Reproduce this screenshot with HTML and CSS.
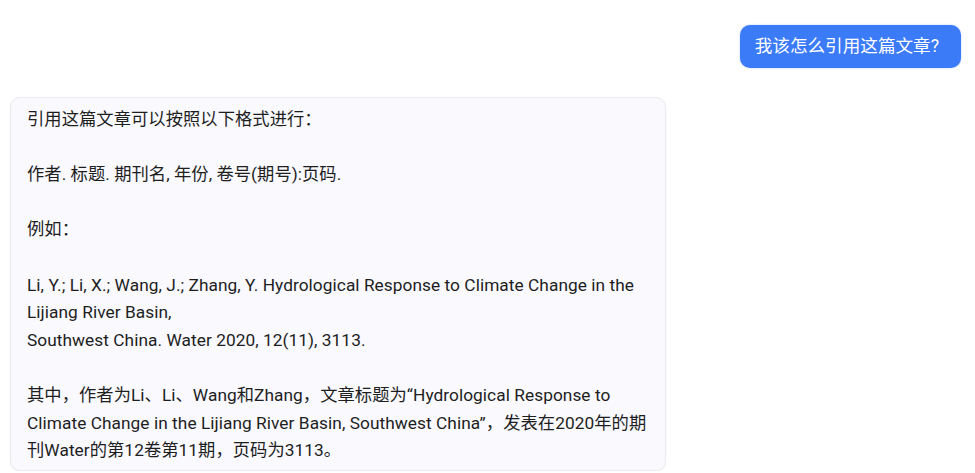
FILE: index.html
```html
<!DOCTYPE html>
<html lang="zh">
<head>
<meta charset="utf-8">
<link rel="stylesheet" href="styles.css">
</head>
<body>
<div class="chat">
  <div class="row row-user">
    <div class="bubble-user">我该怎么引用这篇文章?</div>
  </div>
  <div class="row row-bot">
    <div class="bubble-bot">
      <p>引用这篇文章可以按照以下格式进行：</p>
      <p class="blank">&nbsp;</p>
      <p>作者. 标题. 期刊名, 年份, 卷号(期号):页码.</p>
      <p class="blank">&nbsp;</p>
      <p>例如：</p>
      <p class="blank">&nbsp;</p>
      <p>Li, Y.; Li, X.; Wang, J.; Zhang, Y. Hydrological Response to Climate Change in the Lijiang River Basin,<br>Southwest China. Water 2020, 12(11), 3113.</p>
      <p class="blank">&nbsp;</p>
      <p>其中，作者为Li、Li、Wang和Zhang，文章标题为“Hydrological Response to Climate Change in the Lijiang River Basin, Southwest China”，发表在2020年的期刊Water的第12卷第11期，页码为3113。</p>
    </div>
  </div>
</div>
</body>
</html>
```

FILE: styles.css
```css
html, body {
  margin: 0;
  padding: 0;
  background: #ffffff;
}
body {
  font-family: Roboto, "Noto Sans CJK SC", sans-serif;
  font-size: 17.3px;
  color: #1e1e1e;
}
.chat {
  display: flex;
  flex-direction: column;
  padding: 25px 14px 0 10px;
  gap: 29px;
}
.row {
  display: flex;
}
.row-user {
  justify-content: flex-end;
}
.bubble-user {
  background: #3b7bf7;
  color: #ffffff;
  font-size: 17.6px;
  border-radius: 10px;
  padding: 10px 22px 10px 15px;
  line-height: 23px;
  box-shadow: 0 0 2px rgba(59, 123, 247, 0.4);
}
.bubble-bot {
  width: 656px;
  box-sizing: border-box;
  background: #f9f9fe;
  border: 1px solid #ebebef;
  border-radius: 10px;
  padding: 8px 16px 5px 16px;
  line-height: 27.6px;
  letter-spacing: 0.05px;
  box-shadow: 0 1px 3px rgba(0, 0, 0, 0.05);
}
.bubble-bot p {
  margin: 0;
}
```
